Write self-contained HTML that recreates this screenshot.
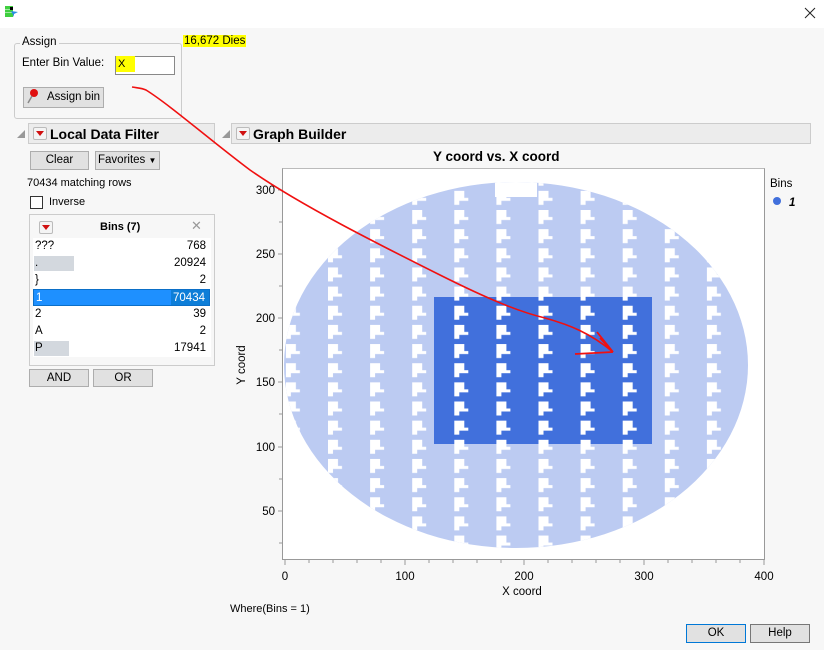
<!DOCTYPE html>
<html><head><meta charset="utf-8"><style>
*{box-sizing:border-box;margin:0;padding:0}
body{width:824px;height:650px;background:#f7f7f7;font-family:"Liberation Sans",sans-serif;font-size:11px;color:#000;position:relative;overflow:hidden;white-space:nowrap}
.a{position:absolute}
.btn{position:absolute;background:#e1e1e1;border:1px solid #adadad;text-align:center;font-size:11.5px;line-height:16px}
.bar{position:absolute;background:#ececec;border:1px solid #ccc;height:21px}
.bar b{position:absolute;left:21px;top:2px;font-size:14px}
.dd{position:absolute;left:4px;top:3px;width:14px;height:13px;background:#f4f4f4;border:1px solid #bbb;border-radius:2px}
.dd:after{content:"";position:absolute;left:2px;top:3px;border-left:4px solid transparent;border-right:4px solid transparent;border-top:5px solid #d01010}
.tri{position:absolute;width:0;height:0;border-left:8px solid transparent;border-bottom:8px solid #999}
.row{position:absolute;left:3px;width:177px;height:17px;line-height:17px;font-size:11.5px}
.row .n{position:absolute;right:4px}
.row .l{position:absolute;left:2px}
</style></head><body>
<div class="a" style="left:0;top:0;width:824px;height:28px;background:#fff"></div>
<svg class="a" style="left:5px;top:5px" width="14" height="13"><rect x="0" y="1" width="8" height="11" fill="#3fcf3f"/><rect x="0" y="4" width="8" height="1" fill="#9fe79f"/><rect x="0" y="7" width="8" height="1" fill="#9fe79f"/><rect x="5" y="2" width="3" height="3" fill="#000"/><path d="M6 6 L13 7 L9 9 L9 12 Z" fill="#2a8de0"/></svg>
<svg class="a" style="left:804px;top:7px" width="12" height="12"><path d="M1 1 L11 11 M11 1 L1 11" stroke="#222" stroke-width="1"/></svg>

<div class="a" style="left:14px;top:43px;width:168px;height:76px;border:1px solid #ccc;border-radius:3px"></div>
<div class="a" style="left:20px;top:36px;background:#f7f7f7;padding:0 2px;font-size:11.5px">Assign</div>
<div class="a" style="left:183px;top:35px;background:#ffff00;padding:0 1px;font-size:11.5px">16,672 Dies</div>
<div class="a" style="left:22px;top:57px;font-size:11.5px">Enter Bin Value:</div>
<div class="a" style="left:115px;top:56px;width:60px;height:19px;background:#fff;border:1px solid #888"></div>
<div class="a" style="left:116px;top:56px;width:19px;height:16px;background:#ffff00;padding-left:2px;line-height:16px">X</div>
<div class="btn" style="left:23px;top:87px;width:81px;height:21px;line-height:19px;padding-left:20px">Assign bin</div>
<svg class="a" style="left:26px;top:88px" width="14" height="16"><circle cx="8" cy="5" r="4" fill="#e01010"/><line x1="6" y1="8" x2="2" y2="15" stroke="#888" stroke-width="1.5"/></svg>

<div class="tri" style="left:17px;top:130px"></div>
<div class="bar" style="left:28px;top:123px;width:187px"><div class="dd"></div><b>Local Data Filter</b></div>
<div class="tri" style="left:222px;top:130px"></div>
<div class="bar" style="left:231px;top:123px;width:580px"><div class="dd"></div><b>Graph Builder</b></div>

<div class="btn" style="left:30px;top:151px;width:59px;height:19px">Clear</div>
<div class="btn" style="left:95px;top:151px;width:65px;height:19px;text-align:left;padding-left:2px">Favorites <span style="font-size:8px">▼</span></div>
<div class="a" style="left:27px;top:177px">70434 matching rows</div>
<div class="a" style="left:30px;top:196px;width:13px;height:13px;background:#fff;border:1px solid #333"></div>
<div class="a" style="left:49px;top:196px">Inverse</div>

<div class="a" style="left:29px;top:214px;width:186px;height:152px;border:1px solid #ccc;background:#f7f7f7">
 <div class="dd" style="left:9px;top:6px"></div>
 <div class="a" style="left:70px;top:6px;font-weight:bold">Bins (7)</div>
 <div class="a" style="left:161px;top:3px;color:#999;font-size:13px">✕</div>
 <div class="a" style="left:3px;top:23px;width:178px;height:119px;background:#fff"></div>
 <div class="row" style="top:23px"><span class="l">???</span><span class="n">768</span></div>
 <div class="a" style="left:4px;top:41px;width:40px;height:15px;background:#d3d8de"></div>
 <div class="row" style="top:40px"><span class="l">.</span><span class="n">20924</span></div>
 <div class="row" style="top:57px"><span class="l">}</span><span class="n">2</span></div>
 <div class="row" style="top:74px;background:#1e90ff;color:#fff;border:1px solid #0b6fc7"><div class="a" style="right:0;top:0;width:38px;height:15px;background:#0d7ed8"></div><span class="l">1</span><span class="n">70434</span></div>
 <div class="row" style="top:91px"><span class="l">2</span><span class="n">39</span></div>
 <div class="row" style="top:108px"><span class="l">A</span><span class="n">2</span></div>
 <div class="a" style="left:4px;top:126px;width:35px;height:15px;background:#d3d8de"></div>
 <div class="row" style="top:125px"><span class="l">P</span><span class="n">17941</span></div>
</div>
<div class="btn" style="left:29px;top:369px;width:60px;height:18px">AND</div>
<div class="btn" style="left:93px;top:369px;width:60px;height:18px">OR</div>

<div class="a" style="left:433px;top:149px;font-weight:bold;font-size:13.5px">Y coord vs. X coord</div>
<div class="a" style="left:282px;top:168px;width:483px;height:392px;background:#fff;border-left:1px solid #999;border-bottom:1px solid #999;border-right:1px solid #999;border-top:1px solid #bbb"></div>
<svg class="a" style="left:0;top:0" width="824" height="650">
<defs>
<pattern id="p" patternUnits="userSpaceOnUse" x="328" y="210" width="42.1" height="19.15">
<rect x="0" y="0" width="10" height="8" fill="#fff"/><rect x="0" y="7" width="14" height="3" fill="#fff"/><rect x="0" y="9" width="5" height="5" fill="#fff"/>
</pattern>
<clipPath id="c"><ellipse cx="516" cy="365" rx="232" ry="183"/></clipPath>
</defs>
<g clip-path="url(#c)">
<rect x="280" y="180" width="480" height="380" fill="#bccbf2"/>
<rect x="495" y="180" width="42" height="17" fill="#fff"/>
<rect x="434" y="297" width="218" height="147" fill="#4170dc"/>
<rect x="280" y="180" width="480" height="380" fill="url(#p)"/>
</g>
<g stroke="#999" stroke-width="1">
<line x1="278" y1="190" x2="282" y2="190"/><line x1="278" y1="254" x2="282" y2="254"/><line x1="278" y1="318" x2="282" y2="318"/><line x1="278" y1="382" x2="282" y2="382"/><line x1="278" y1="447" x2="282" y2="447"/><line x1="278" y1="511" x2="282" y2="511"/>
<line x1="279" y1="222" x2="282" y2="222"/><line x1="279" y1="286" x2="282" y2="286"/><line x1="279" y1="350" x2="282" y2="350"/><line x1="279" y1="414" x2="282" y2="414"/><line x1="279" y1="479" x2="282" y2="479"/><line x1="279" y1="543" x2="282" y2="543"/>
<line x1="285" y1="560" x2="285" y2="565"/><line x1="405" y1="560" x2="405" y2="565"/><line x1="524" y1="560" x2="524" y2="565"/><line x1="644" y1="560" x2="644" y2="565"/><line x1="764" y1="560" x2="764" y2="565"/>
<line x1="309" y1="560" x2="309" y2="563"/><line x1="333" y1="560" x2="333" y2="563"/><line x1="357" y1="560" x2="357" y2="563"/><line x1="381" y1="560" x2="381" y2="563"/><line x1="429" y1="560" x2="429" y2="563"/><line x1="453" y1="560" x2="453" y2="563"/><line x1="477" y1="560" x2="477" y2="563"/><line x1="501" y1="560" x2="501" y2="563"/><line x1="548" y1="560" x2="548" y2="563"/><line x1="572" y1="560" x2="572" y2="563"/><line x1="596" y1="560" x2="596" y2="563"/><line x1="620" y1="560" x2="620" y2="563"/><line x1="668" y1="560" x2="668" y2="563"/><line x1="692" y1="560" x2="692" y2="563"/><line x1="716" y1="560" x2="716" y2="563"/><line x1="740" y1="560" x2="740" y2="563"/>
</g>
<g font-family="Liberation Sans" font-size="11.5" text-anchor="end">
<text x="275" y="194">300</text><text x="275" y="258">250</text><text x="275" y="322">200</text><text x="275" y="386">150</text><text x="275" y="451">100</text><text x="275" y="515">50</text>
</g>
<g font-family="Liberation Sans" font-size="11.5" text-anchor="middle">
<text x="285" y="580">0</text><text x="405" y="580">100</text><text x="524" y="580">200</text><text x="644" y="580">300</text><text x="764" y="580">400</text>
<text x="522" y="595">X coord</text>
<text transform="translate(245,365) rotate(-90)">Y coord</text>
</g>
<text x="770" y="187" font-family="Liberation Sans" font-size="11.5">Bins</text>
<circle cx="777" cy="201" r="4" fill="#4170dc"/>
<text x="789" y="206" font-family="Liberation Sans" font-size="11.5" font-weight="bold" font-style="italic">1</text>
<path d="M132 87 C138 88 142 88 146 90 C170 105 210 140 250 170 C300 205 380 245 440 275 C490 300 520 312 545 318 C570 325 590 333 613 352" fill="none" stroke="#f01010" stroke-width="1.6"/>
<path d="M575 354 L613 352 M597 332 L613 352 M600 338 L611 350" fill="none" stroke="#f01010" stroke-width="1.8"/>
</svg>
<div class="a" style="left:230px;top:603px">Where(Bins = 1)</div>
<div class="btn" style="left:686px;top:624px;width:60px;height:19px;border-color:#0078d7">OK</div>
<div class="btn" style="left:750px;top:624px;width:60px;height:19px;border-color:#777">Help</div>
</body></html>
